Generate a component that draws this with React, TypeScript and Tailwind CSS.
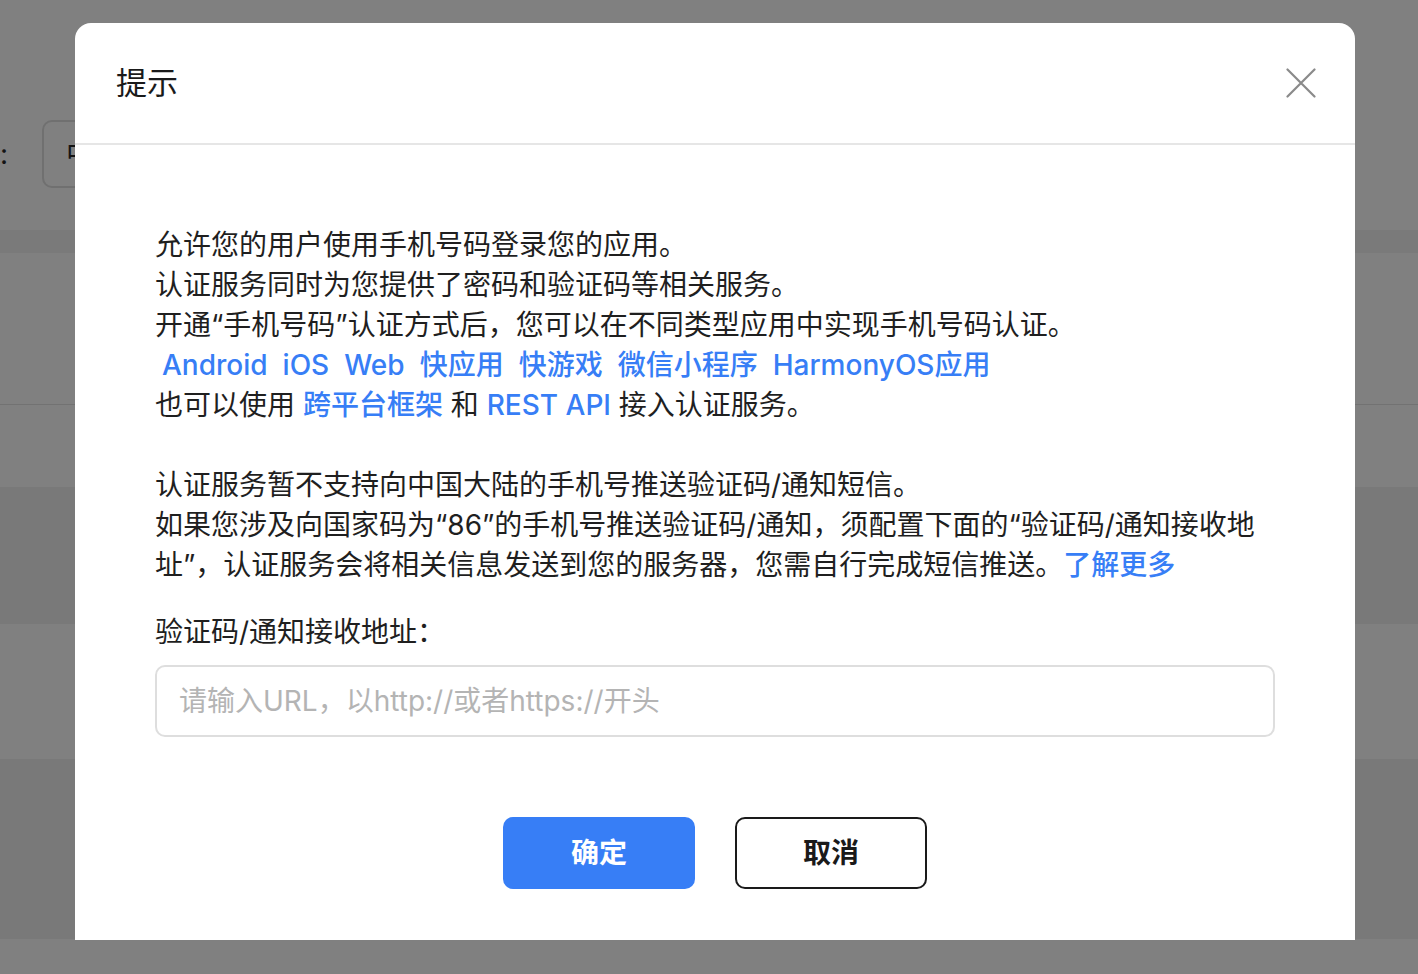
import React from 'react';

const font = "font-['Inter','Noto_Sans_CJK_SC',sans-serif]";

const A = ({ children, className = '' }: { children: React.ReactNode; className?: string }) => (
  <a href="#" className={`font-medium text-[#377ef6] ${className}`}>
    {children}
  </a>
);

const platforms = ['Android', 'iOS', 'Web', '快应用', '快游戏', '微信小程序', 'HarmonyOS应用'];

export default function App() {
  return (
    <div className={`relative h-[974px] w-full overflow-hidden bg-[#808080] ${font}`}>
      {/* page behind the mask */}
      <div className="flex h-[230px] items-start pt-[120px]">
        <span className="flex h-[68px] w-[42px] items-center text-[28px] text-[#141414]">:</span>
        <div className="flex h-[68px] w-[300px] items-center rounded-[10px] border-2 border-[#707070] pl-[22px] text-[28px] text-[#141414]">
          中国
        </div>
      </div>
      <div className="h-[23px] bg-[#7a7a7a]" />
      <div className="h-[151px]" />
      <div className="h-px bg-[#727272]" />
      <div className="h-[82px]" />
      <div className="h-[137px] bg-[#797979]" />
      <div className="h-[135px]" />
      <div className="h-[180px] bg-[#797979]" />

      {/* dialog */}
      <div className="absolute left-[75px] top-[23px] flex h-[917px] w-[1280px] flex-col rounded-t-[16px] bg-white">
        <div className="flex h-[122px] items-center justify-between border-b-2 border-[#e6e6e6] pl-[41px] pr-[39px]">
          <h2 className="text-[31px] leading-[40px] text-[#1a1a1a]">提示</h2>
          <button className="flex h-[30px] w-[30px] items-center justify-center">
            <svg width="30" height="30" viewBox="0 0 30 30" fill="none" stroke="#8a8a8a" strokeWidth="2.2" strokeLinecap="round">
              <path d="M1.5 1.5 28.5 28.5M28.5 1.5 1.5 28.5" />
            </svg>
          </button>
        </div>

        <div className="flex flex-col px-[80px] pt-[80px] text-[28px] leading-[40px] text-[#1f1f1f]">
          <div>
            <div className="whitespace-nowrap">允许您的用户使用手机号码登录您的应用。</div>
            <div className="whitespace-nowrap">认证服务同时为您提供了密码和验证码等相关服务。</div>
            <div className="whitespace-nowrap">开通“手机号码”认证方式后，您可以在不同类型应用中实现手机号码认证。</div>
            <div className="whitespace-nowrap">
              {platforms.map((p) => (
                <A key={p} className="ml-[7px] mr-[8px]">
                  {p}
                </A>
              ))}
            </div>
            <div className="whitespace-nowrap">
              也可以使用 <A>跨平台框架</A> 和 <A>REST API</A> 接入认证服务。
            </div>
          </div>

          <div className="mt-[40px]">
            <div className="whitespace-nowrap">认证服务暂不支持向中国大陆的手机号推送验证码/通知短信。</div>
            <div className="whitespace-nowrap">如果您涉及向国家码为“86”的手机号推送验证码/通知，须配置下面的“验证码/通知接收地</div>
            <div className="whitespace-nowrap">
              址”，认证服务会将相关信息发送到您的服务器，您需自行完成短信推送。<A>了解更多</A>
            </div>
          </div>

          <label className="mt-[27px]">验证码/通知接收地址：</label>
          <input
            className="mt-[13px] h-[72px] w-full rounded-[10px] border-2 border-[#dedede] px-[22px] text-[28px] outline-none placeholder:text-[#b4b4b4]"
            placeholder="请输入URL，以http://或者https://开头"
          />

          <div className="mt-[80px] flex justify-center gap-[40px]">
            <button className="h-[72px] w-[192px] rounded-[10px] bg-[#377ef6] text-[28px] font-bold text-white">确定</button>
            <button className="h-[72px] w-[192px] rounded-[10px] border-2 border-[#1a1a1a] text-[28px] font-bold text-[#1a1a1a]">取消</button>
          </div>
        </div>
      </div>
    </div>
  );
}
